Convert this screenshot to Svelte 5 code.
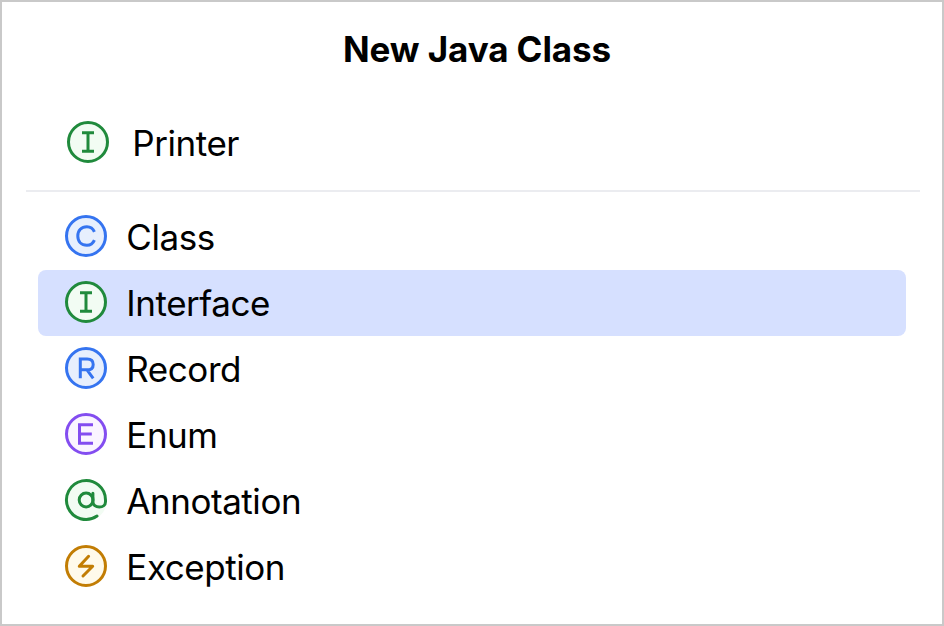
<script>
  const rows = [
    ['Class', 'c'], ['Interface', 'i'], ['Record', 'r'],
    ['Enum', 'e'], ['Annotation', 'a'], ['Exception', 'x']
  ];
  const colors = {
    c: ['#3574f0', '#e7effd'], i: ['#208a3c', '#f2fcf3'], r: ['#3574f0', '#e7effd'],
    e: ['#834df0', '#faf5ff'], a: ['#208a3c', '#f2fcf3'], x: ['#c27d04', '#fffaeb']
  };
  const glyphs = {
    c: 'M30.4 26.2C29.1 29.3 26.5 31.3 22.9 31.3C17.4 31.3 13.8 27.5 13.8 22S17.4 12.7 22.9 12.7C26.5 12.7 29.1 14.7 30.4 17.8',
    i: 'M16 12.8H28M22 12.8V31.2M16 31.2H28',
    r: 'M16.3 32.3V13H23.2C27.1 13 29.2 15.1 29.2 18.4S27.1 23.8 23.2 23.8H16.3M23 23.8L29.2 32.3',
    e: 'M29 12.8H15.5V31.2H29M15.5 21.9H27.8',
    x: 'M24.6 12.3L15.3 22.3H28.7L19 32'
  };
</script>

{#snippet icon(kind)}
  <svg viewBox="0 0 44 44" fill="none" stroke={colors[kind][0]} stroke-width="3">
    {#if kind === 'a'}
      <circle cx="22" cy="22" r="21" fill={colors.a[1]} stroke="none" />
      <path stroke-linecap="round" d="M33 38.1A19.5 19.5 0 1 1 41.5 22V23.7C41.5 27 38.8 29.1 35.3 29.1S28.9 27 28.9 23.7V15.3" />
      <ellipse cx="22.1" cy="22" rx="6.9" ry="6.9" />
    {:else}
      <circle cx="22" cy="22" r="19.5" fill={colors[kind][1]} />
      <path d={glyphs[kind]} stroke-linecap={kind === 'x' ? 'round' : 'butt'} stroke-linejoin={kind === 'x' ? 'round' : 'miter'} />
    {/if}
  </svg>
{/snippet}

<main>
  <h1>New Java Class</h1>
  <div class="name">{@render icon('i')}<span>Printer</span></div>
  <ul>
    {#each rows as [label, kind]}
      <li class:selected={kind === 'i'}>{@render icon(kind)}<span>{label}</span></li>
    {/each}
  </ul>
</main>

<style>
  :global(body) { margin: 0; }
  main { box-sizing: border-box; width: 944px; height: 626px; border: 2px solid #c9c9c9; background: #fff; color: #000; font-family: Inter, sans-serif; padding: 0 22px 0 24px; }
  h1 { margin: 0; height: 94px; line-height: 94px; font-size: 35px; font-weight: 700; letter-spacing: -.1px; text-align: center; padding-left: 8px; }
  .name { display: flex; align-items: center; box-sizing: border-box; height: 96px; padding: 0 0 2px 40px; border-bottom: 2px solid #ebecf0; font-size: 35px; }
  svg { width: 44px; height: 44px; flex: none; }
  span { letter-spacing: -.45px; }
  .name span { margin-left: 22.3px; padding-top: 2px; }
  ul { list-style: none; margin: 0; padding: 12px 14px 0 12px; }
  li { display: flex; align-items: center; height: 66px; padding-left: 26px; font-size: 35px; border-radius: 8px; }
  li svg { position: relative; top: -1px; }
  li span { margin-left: 18.3px; }
  .selected { background: #d6e0ff; }
</style>
